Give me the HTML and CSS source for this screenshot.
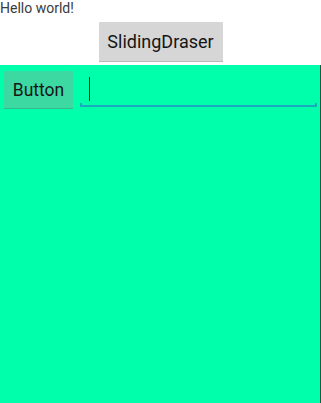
FILE: index.html
```html
<!DOCTYPE html>
<html>
<head>
<meta charset="utf-8">
<link rel="stylesheet" href="styles.css">
</head>
<body>
<div class="screen">
  <div class="hello">Hello world!</div>
  <div class="top-row">
    <div class="btn btn-gray">SlidingDraser</div>
  </div>
  <div class="drawer">
    <div class="row">
      <div class="btn btn-green">Button</div>
      <div class="edit">
        <span class="cursor"></span>
        <span class="underline"></span>
      </div>
    </div>
  </div>
</div>
</body>
</html>
```
FILE: styles.css
```css
html, body {
  margin: 0;
  padding: 0;
  height: 100%;
  background: #ffffff;
}
.screen {
  display: flex;
  flex-direction: column;
  height: 403px;
  font-family: Roboto, "Liberation Sans", sans-serif;
}
.hello {
  font-size: 14px;
  line-height: 17px;
  color: #3a3a3a;
  padding-left: 0;
}
.top-row {
  display: flex;
  justify-content: center;
  padding-top: 5px;
  padding-bottom: 3px;
}
.btn {
  display: flex;
  align-items: center;
  justify-content: center;
  box-sizing: border-box;
  color: #151515;
}
.btn-gray {
  width: 124px;
  height: 40px;
  background: #d6d6d6;
  border-bottom: 1px solid #b9b9b9;
  font-size: 18px;
  padding-bottom: 1px;
}
.drawer {
  flex: 1;
  background: #00ffaa;
  border-right: 1px solid #0c5a44;
  padding: 6px 3px 0 4px;
}
.row {
  display: flex;
  align-items: flex-start;
}
.btn-green {
  width: 69px;
  height: 38px;
  background: #3dd9a3;
  border-bottom: 1px solid #35b98c;
  font-size: 17.5px;
}
.edit {
  position: relative;
  flex: 1;
  margin-left: 7px;
  height: 36px;
}
.cursor {
  position: absolute;
  left: 9px;
  top: 6px;
  width: 1px;
  height: 24px;
  background: #1a2a22;
}
.underline {
  position: absolute;
  left: 0;
  right: 0;
  bottom: 0;
  height: 4px;
  box-sizing: border-box;
  border: 2px solid #1ba9c0;
  border-top: none;
}
```
